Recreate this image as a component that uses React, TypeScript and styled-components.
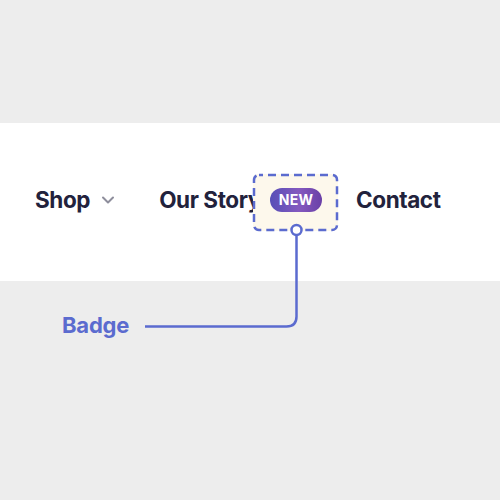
import React from "react";
import styled, { createGlobalStyle } from "styled-components";

const Global = createGlobalStyle`
  html, body { margin: 0; padding: 0; }
  body { background: #ededed; font-family: Inter, "Noto Sans", sans-serif; }
`;

const Page = styled.div`
  position: relative;
  width: 500px;
  height: 500px;
  background: #ededed;
  padding-top: 123px;
  box-sizing: border-box;
`;

const Band = styled.nav`
  height: 158px;
  background: #ffffff;
  display: flex;
  align-items: center;
  padding-left: 35px;
  padding-bottom: 5px;
  box-sizing: border-box;
`;

const NavItem = styled.a<{ $gapAfter: number }>`
  display: flex;
  align-items: center;
  gap: 11px;
  margin-right: ${(p) => p.$gapAfter}px;
  font-size: 22.5px;
  font-weight: 700;
  letter-spacing: -0.4px;
  color: #22223c;
  text-decoration: none;
`;

const Chevron = styled.svg`
  width: 14px;
  height: 14px;
  margin-top: 1px;
`;

const BadgeWrap = styled.span`
  position: relative;
  display: inline-flex;
  margin-left: 9px;
  margin-right: 34px;
`;

const Highlight = styled.span`
  position: absolute;
  left: -17px;
  right: -16px;
  top: -14px;
  bottom: -19px;
  border-radius: 5px;
  background: #fdf8ec;
`;

const DashedFrame = styled.svg`
  position: absolute;
  inset: 0;
  width: 100%;
  height: 100%;
  overflow: visible;
`;

const Badge = styled.span`
  position: relative;
  display: inline-flex;
  align-items: center;
  justify-content: center;
  width: 52px;
  height: 24px;
  border-radius: 12px;
  background: linear-gradient(90deg, #574fb7 0%, #8459bf 55%, #6a40a7 100%);
  color: #ffffff;
  font-size: 14px;
  font-weight: 700;
  letter-spacing: 0.2px;
`;

const Connector = styled.svg`
  position: absolute;
  left: 0;
  top: 0;
  width: 500px;
  height: 500px;
  pointer-events: none;
`;

const Label = styled.span`
  position: absolute;
  left: 62px;
  top: 312px;
  font-size: 22px;
  font-weight: 700;
  letter-spacing: -0.2px;
  color: #5b6bcf;
`;

export default function App() {
  return (
    <>
      <Global />
      <Page>
        <Band>
          <NavItem $gapAfter={44}>
            Shop
            <Chevron viewBox="0 0 14 14" fill="none">
              <path d="M2 4.5 L7 9.5 L12 4.5" stroke="#8e8e9c" strokeWidth="2" strokeLinecap="round" strokeLinejoin="round" />
            </Chevron>
          </NavItem>
          <NavItem $gapAfter={0}>Our Story</NavItem>
          <BadgeWrap>
            <Highlight>
              <DashedFrame preserveAspectRatio="none" viewBox="0 0 85 57">
                <rect x="1" y="1" width="83" height="55" rx="5" fill="none" stroke="#5b6bcf" strokeWidth="2.5" strokeDasharray="8 5" strokeDashoffset="4" />
              </DashedFrame>
            </Highlight>
            <Badge>NEW</Badge>
          </BadgeWrap>
          <NavItem $gapAfter={0}>Contact</NavItem>
        </Band>
        <Connector viewBox="0 0 500 500">
          <path d="M296.5 235 V316.5 Q296.5 326.5 286.5 326.5 H145" fill="none" stroke="#5b6bcf" strokeWidth="2.5" />
          <circle cx="296.5" cy="230" r="5" fill="#ffffff" stroke="#5b6bcf" strokeWidth="2.5" />
        </Connector>
        <Label>Badge</Label>
      </Page>
    </>
  );
}
